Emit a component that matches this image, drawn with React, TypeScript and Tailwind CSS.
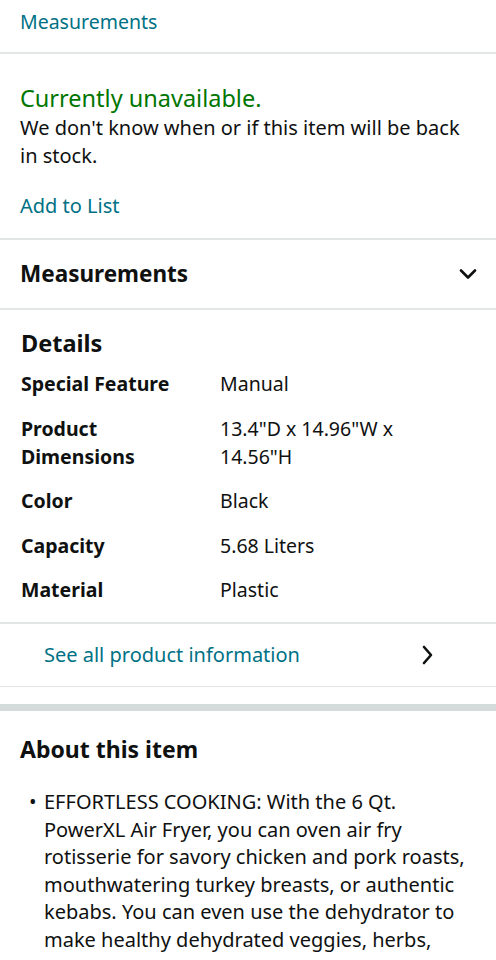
import React from "react";

const font = { fontFamily: '"Noto Sans", "Open Sans", sans-serif' };

function ChevronDown() {
  return (
    <svg width="20" height="14" viewBox="0 0 20 14" fill="none">
      <path d="M3 3.5 L10 10.5 L17 3.5" stroke="#0f1111" strokeWidth="2.6" strokeLinecap="round" strokeLinejoin="round" />
    </svg>
  );
}

function ChevronRight() {
  return (
    <svg width="14" height="22" viewBox="0 0 14 22" fill="none">
      <path d="M4 3 L11 11 L4 19" stroke="#0f1111" strokeWidth="2.6" strokeLinecap="round" strokeLinejoin="round" />
    </svg>
  );
}

const rows: [string, string][] = [
  ["Special Feature", "Manual"],
  ["Product Dimensions", '13.4"D x 14.96"W x 14.56"H'],
  ["Color", "Black"],
  ["Capacity", "5.68 Liters"],
  ["Material", "Plastic"],
];

export default function App() {
  return (
    <div className="w-[496px] bg-white text-[#0f1111]" style={font}>
      <div className="h-[52px] pl-5 pt-[8px] text-[19.5px] leading-[28px] text-[#007185]">Measurements</div>
      <div className="h-[2px] bg-[#e3e6e6]" />
      <div className="pl-5 pr-5 pt-[29px] pb-[18px]">
        <div className="text-[23.5px] leading-[31px] text-[#007600]">Currently unavailable.</div>
        <div className="text-[20px] leading-[28px]">We don't know when or if this item will be back in stock.</div>
        <div className="mt-[22px] text-[20px] leading-[28px] text-[#007185]">Add to List</div>
      </div>
      <div className="h-[2px] bg-[#e3e6e6]" />
      <div className="flex h-[68px] items-center justify-between pl-5 pr-[18px]">
        <span className="text-[22.5px] font-bold leading-[30px]">Measurements</span>
        <ChevronDown />
      </div>
      <div className="h-[2px] bg-[#e3e6e6]" />
      <div className="pl-[21px] pr-5 pt-[17px] pb-[18px]">
        <div className="text-[23.5px] font-bold leading-[32px]">Details</div>
        <div className="mt-[11px] grid grid-cols-[199px_1fr] gap-y-[16.5px] text-[19.5px] leading-[28px]">
          {rows.map(([k, v]) => (
            <React.Fragment key={k}>
              <div className="w-[150px] font-bold">{k}</div>
              <div className="w-[200px]">{v}</div>
            </React.Fragment>
          ))}
        </div>
      </div>
      <div className="h-[1.5px] bg-[#e3e6e6]" />
      <div className="flex h-[62px] items-center justify-between pl-[44px] pr-[62px]">
        <span className="text-[20px] leading-[28px] text-[#007185]">See all product information</span>
        <ChevronRight />
      </div>
      <div className="h-[1.5px] bg-[#e3e6e6]" />
      <div className="h-[17px]" />
      <div className="h-[7px] bg-[#d5dbdb]" />
      <div className="pl-5 pr-5 pt-[22px]">
        <div className="text-[23px] font-bold leading-[32px]">About this item</div>
        <ul className="mt-[23px] pl-[24px] text-[20px] leading-[27.6px]">
          <li className="relative">
            <span className="absolute left-[-15px] top-0">•</span>
            EFFORTLESS COOKING: With the 6 Qt. PowerXL Air Fryer, you can oven air fry rotisserie for savory chicken and pork roasts, mouthwatering turkey breasts, or authentic kebabs. You can even use the dehydrator to make healthy dehydrated veggies, herbs, fruits and more.
          </li>
        </ul>
      </div>
    </div>
  );
}
